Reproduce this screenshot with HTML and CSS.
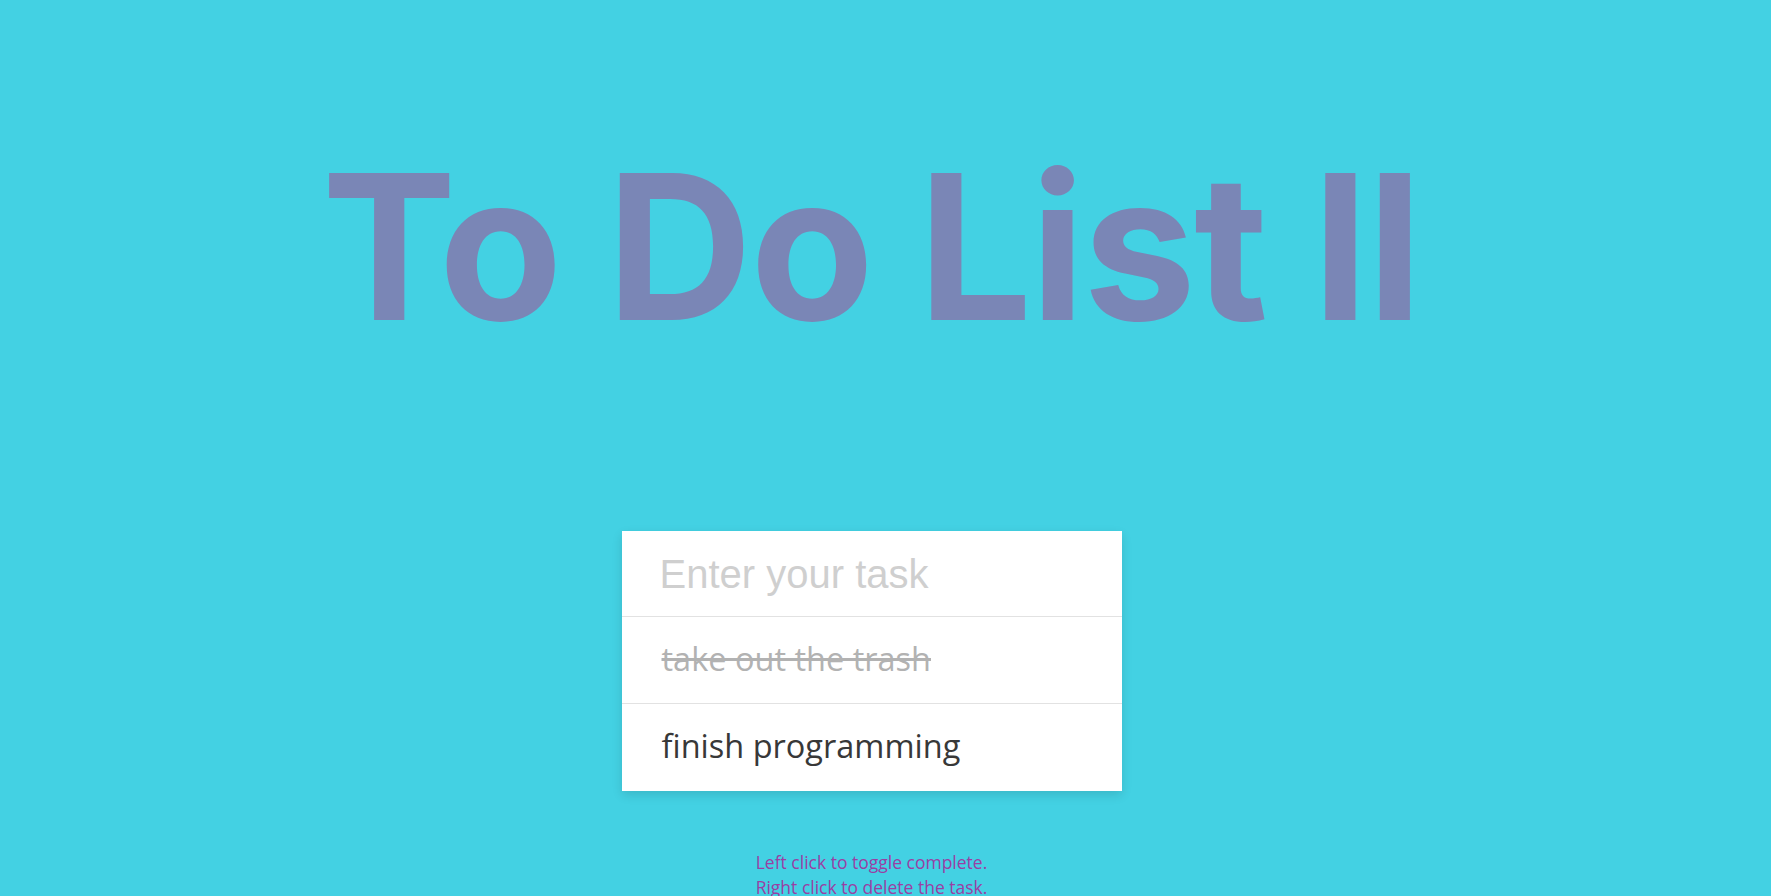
FILE: index.html
```html
<!DOCTYPE html>
<html lang="en">
<head>
<meta charset="utf-8">
<title>To Do List II</title>
<link rel="stylesheet" href="styles.css">
</head>
<body>
<div class="page">
  <h1 class="title">To Do List II</h1>
  <div class="card">
    <input class="task-input" type="text" placeholder="Enter your task">
    <ul class="tasks">
      <li class="task done">take out the trash</li>
      <li class="task">finish programming</li>
    </ul>
  </div>
  <p class="hint">Left click to toggle complete.<br>Right click to delete the task.</p>
</div>
</body>
</html>
```
FILE: styles.css
```css
html, body {
  margin: 0;
  padding: 0;
  background: #43d1e3;
  overflow: hidden;
}
.page {
  display: flex;
  flex-direction: column;
  align-items: center;
  padding-right: 28px;
  padding-top: 146px;
  font-family: "Open Sans", "Noto Sans", sans-serif;
}
.title {
  margin: 0;
  font-family: Inter, "Noto Sans", sans-serif;
  font-weight: 700;
  font-size: 202px;
  line-height: 1;
  color: #7a86b6;
  letter-spacing: -2px;
  white-space: nowrap;
}
.card {
  margin-top: 183px;
  width: 500px;
  background: #fff;
  box-shadow: 0 4px 10px rgba(0, 0, 0, 0.12);
}
.task-input {
  display: block;
  box-sizing: border-box;
  width: 100%;
  height: 86px;
  margin: 0;
  padding: 1px 20px 0 38px;
  border: 0;
  border-bottom: 1px solid #e2e2e2;
  outline: none;
  font-family: "Liberation Sans", Arial, sans-serif;
  font-size: 40px;
  color: #333;
  background: #fff;
}
.task-input::placeholder {
  color: #cfcfcf;
}
.tasks {
  list-style: none;
  margin: 0;
  padding: 0;
}
.task {
  box-sizing: border-box;
  height: 87px;
  padding: 11px 20px 0 40px;
  font-size: 32.5px;
  line-height: 62px;
  color: #383838;
  border-bottom: 1px solid #e2e2e2;
}
.task:last-child {
  border-bottom: 0;
}
.task.done {
  color: #b2b2b2;
  text-decoration: line-through;
  text-decoration-thickness: 3px;
}
.hint {
  margin: 59px 0 0;
  text-align: center;
  font-size: 17.5px;
  line-height: 25px;
  color: #9a3fa4;
}
```
